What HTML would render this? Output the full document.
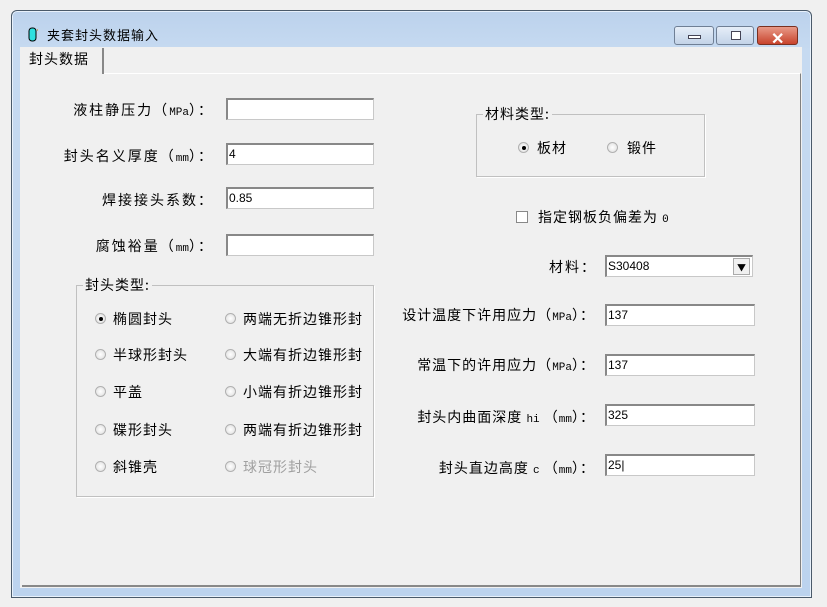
<!DOCTYPE html>
<html><head><meta charset="utf-8"><style>
*{margin:0;padding:0;box-sizing:border-box}
body{width:827px;height:607px;background:#f0f0f0;position:relative;overflow:hidden;font-family:"Noto Sans CJK SC","Liberation Sans",sans-serif;font-size:14px;color:#000}
.a{position:absolute;white-space:nowrap;letter-spacing:1px}
.win{position:absolute;left:11px;top:10px;width:801px;height:588px;border:1px solid #4a5a6a;border-radius:6px 6px 0 0;background:linear-gradient(#bcd2ec,#c6daf1 40px,#bcd3ee);box-shadow:inset 0 0 0 1px #e8f1fb}
.client{position:absolute;left:20px;top:47px;width:782px;height:541px;background:#f0f0f0}
.inp{position:absolute;background:#fff;border:1px solid #c8c8c8;border-top:2px solid #888;border-left:2px solid #888;height:22px;font-size:12px;padding-left:1px;line-height:18px;font-family:"Liberation Sans",sans-serif}
.lbl{position:absolute;text-align:right;white-space:nowrap;letter-spacing:2px;line-height:18px}
.m{font-family:"Liberation Mono",monospace;font-size:11px;letter-spacing:0}
.grp{position:absolute;border:1px solid #c0c0c0;box-shadow:1px 1px 0 #fff}
.gt{position:absolute;background:#f0f0f0;padding:0 2px;top:-11px;left:6px;letter-spacing:1px}
.r{position:absolute;width:11px;height:11px;border-radius:50%;border:1px solid #b0b0b0;background:radial-gradient(#fff,#dcdcdc)}
.r.on::after{content:"";position:absolute;left:3px;top:3px;width:4px;height:4px;border-radius:50%;background:#000}
.btn{position:absolute;top:26px;height:19px;border:1px solid #6f7f95;border-radius:3px;background:linear-gradient(#e6eef8,#c3d3e8)}
</style></head><body>
<div class="win"></div>
<svg class="a" style="left:27px;top:27px" width="12" height="16"><rect x="2" y="1" width="7" height="13" rx="3" fill="#2ee0e0" stroke="#000"/><path d="M10 3 L11 3" stroke="#c80" /></svg>
<div class="a" style="left:47px;top:25px;font-size:13px">夹套封头数据输入</div>
<div class="btn" style="left:674px;width:40px"><div class="a" style="left:13px;top:8px;width:13px;height:4px;border:1px solid #445;background:#fff"></div></div>
<div class="btn" style="left:716px;width:38px"><div class="a" style="left:14px;top:4px;width:10px;height:9px;border:1px solid #445;background:#fff"></div></div>
<div class="btn" style="left:757px;width:41px;background:linear-gradient(#e89a88,#c8432c);border-color:#7a3020"><div class="a" style="left:13px;top:-2px;color:#fff;font-weight:bold;font-size:16px">✕</div></div>
<div class="client"></div>
<div class="a" style="left:22px;top:73px;width:779px;height:514px;border-right:1px solid #808080;border-bottom:2px solid #888;border-top:1px solid #fff"></div>
<div class="a" style="left:21px;top:48px;width:83px;height:26px;background:#f0f0f0;border-right:2px solid #888"></div>
<div class="a" style="left:29px;top:49px;font-size:14px">封头数据</div>

<div class="lbl" style="right:613px;top:101px">液柱静压力（<span class="m">MPa</span>）：</div>
<div class="inp" style="left:226px;top:98px;width:148px"></div>
<div class="lbl" style="right:613px;top:147px">封头名义厚度（<span class="m">mm</span>）：</div>
<div class="inp" style="left:226px;top:143px;width:148px">4</div>
<div class="lbl" style="right:613px;top:191px">焊接接头系数：</div>
<div class="inp" style="left:226px;top:187px;width:148px">0.85</div>
<div class="lbl" style="right:613px;top:237px">腐蚀裕量（<span class="m">mm</span>）：</div>
<div class="inp" style="left:226px;top:234px;width:148px"></div>

<div class="grp" style="left:76px;top:285px;width:298px;height:212px"><div class="gt">封头类型:</div></div>
<div class="r on" style="left:95px;top:313px"></div><div class="a" style="left:113px;top:309px">椭圆封头</div>
<div class="r" style="left:225px;top:313px"></div><div class="a" style="left:243px;top:309px">两端无折边锥形封</div>
<div class="r" style="left:95px;top:349px"></div><div class="a" style="left:113px;top:345px">半球形封头</div>
<div class="r" style="left:225px;top:349px"></div><div class="a" style="left:243px;top:345px">大端有折边锥形封</div>
<div class="r" style="left:95px;top:386px"></div><div class="a" style="left:113px;top:382px">平盖</div>
<div class="r" style="left:225px;top:386px"></div><div class="a" style="left:243px;top:382px">小端有折边锥形封</div>
<div class="r" style="left:95px;top:424px"></div><div class="a" style="left:113px;top:420px">碟形封头</div>
<div class="r" style="left:225px;top:424px"></div><div class="a" style="left:243px;top:420px">两端有折边锥形封</div>
<div class="r" style="left:95px;top:461px"></div><div class="a" style="left:113px;top:457px">斜锥壳</div>
<div class="r" style="left:225px;top:461px"></div><div class="a" style="left:243px;top:457px;color:#a0a0a0">球冠形封头</div>

<div class="grp" style="left:476px;top:114px;width:229px;height:63px"><div class="gt">材料类型:</div></div>
<div class="r on" style="left:518px;top:142px"></div><div class="a" style="left:537px;top:138px">板材</div>
<div class="r" style="left:607px;top:142px"></div><div class="a" style="left:627px;top:138px">锻件</div>

<div class="a" style="left:516px;top:211px;width:12px;height:12px;border:1px solid #888;background:#fff"></div>
<div class="a" style="left:538px;top:207px">指定钢板负偏差为 <span class="m">0</span></div>

<div class="lbl" style="right:230px;top:258px">材料：</div>
<div class="inp" style="left:605px;top:255px;width:148px">S30408</div>
<div class="a" style="left:733px;top:258px;width:17px;height:17px;border:1px solid #aaa;background:#f0f0f0;font-size:9px;text-align:center;line-height:17px;letter-spacing:0">▼</div>

<div class="lbl" style="right:232px;top:306px;letter-spacing:1px">设计温度下许用应力（<span class="m">MPa</span>）：</div>
<div class="inp" style="left:605px;top:304px;width:150px">137</div>
<div class="lbl" style="right:232px;top:356px;letter-spacing:1px">常温下的许用应力（<span class="m">MPa</span>）：</div>
<div class="inp" style="left:605px;top:354px;width:150px">137</div>
<div class="lbl" style="right:232px;top:408px;letter-spacing:1px">封头内曲面深度 <span class="m">hi</span> （<span class="m">mm</span>）：</div>
<div class="inp" style="left:605px;top:404px;width:150px">325</div>
<div class="lbl" style="right:232px;top:459px;letter-spacing:1px">封头直边高度 <span class="m">c</span> （<span class="m">mm</span>）：</div>
<div class="inp" style="left:605px;top:454px;width:150px">25|</div>
</body></html>
